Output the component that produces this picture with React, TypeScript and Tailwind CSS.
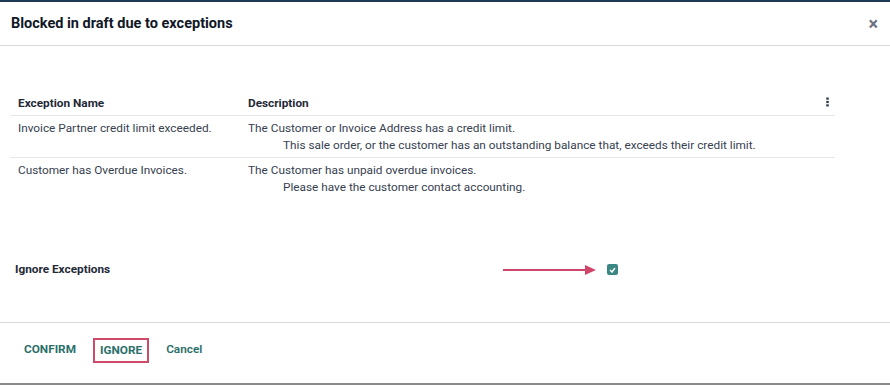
import React from 'react';

const rows = [
  {
    name: 'Invoice Partner credit limit exceeded.',
    desc: ['The Customer or Invoice Address has a credit limit.', 'This sale order, or the customer has an outstanding balance that, exceeds their credit limit.'],
  },
  {
    name: 'Customer has Overdue Invoices.',
    desc: ['The Customer has unpaid overdue invoices.', 'Please have the customer contact accounting.'],
  },
];

const App: React.FC = () => {
  return (
    <div className="w-[890px] h-[385px] bg-white flex flex-col font-['Roboto',sans-serif] text-[#374151] overflow-hidden">
      <div className="h-[2px] bg-[#1e3a52]" />
      {/* Header */}
      <div className="h-[44px] flex items-center justify-between pl-[11px] pr-[12px] border-b border-[#d8dadd]">
        <h4 className="text-[14.5px] font-bold text-[#111827]">Blocked in draft due to exceptions</h4>
        <span className="text-[#6b7280] text-[18px] leading-none font-bold">×</span>
      </div>

      {/* Body */}
      <div className="flex-1 flex flex-col pl-[10px] pr-[55px] pt-[43px]">
        <table className="w-full text-[11.8px] border-collapse">
          <thead>
            <tr className="border-b border-[#e5e7eb]">
              <th className="text-left font-bold text-[#1f2937] pl-[8px] pt-[6px] pb-[3px] leading-[17px] w-[238px]">Exception Name</th>
              <th className="text-left font-bold text-[#1f2937] pt-[6px] pb-[3px] leading-[17px]">Description</th>
              <th className="w-[20px] pr-[6px] text-right text-[#374151] leading-[17px]">
                <svg width="3" height="10" viewBox="0 0 3 10" className="inline-block">
                  <rect x="0.2" y="0.5" width="2.6" height="2.2" fill="currentColor" />
                  <rect x="0.2" y="3.9" width="2.6" height="2.2" fill="currentColor" />
                  <rect x="0.2" y="7.3" width="2.6" height="2.2" fill="currentColor" />
                </svg>
              </th>
            </tr>
          </thead>
          <tbody>
            {rows.map((r, i) => (
              <tr key={i} className={i === 0 ? 'border-b border-[#e5e7eb]' : ''}>
                <td className="align-top pl-[8px] pt-[4px] pb-[3px] leading-[17px]">{r.name}</td>
                <td className="align-top pt-[4px] pb-[3px] leading-[17px]" colSpan={2}>
                  <div>{r.desc[0]}</div>
                  <div className="pl-[35px]">{r.desc[1]}</div>
                </td>
              </tr>
            ))}
          </tbody>
        </table>

        <div className="mt-[62px] flex items-center pl-[5px]">
          <span className="text-[11.8px] font-bold text-[#1f2937] w-[488px]">Ignore Exceptions</span>
          <svg width="94" height="12" viewBox="0 0 94 12" className="mr-[10px]">
            <line x1="0" y1="6" x2="84" y2="6" stroke="#d0466a" strokeWidth="2" />
            <polygon points="82,1 93,6 82,11" fill="#d0466a" />
          </svg>
          <span className="w-[11px] h-[11px] bg-[#3b8783] rounded-[2px] flex items-center justify-center">
            <svg width="7" height="6" viewBox="0 0 7 6">
              <path d="M1 3 L3 5 L6 1" stroke="white" strokeWidth="1.5" fill="none" />
            </svg>
          </span>
        </div>
      </div>

      {/* Footer */}
      <div className="h-[61px] border-t border-[#d8dadd] flex items-center pb-[6px] pl-[24px] gap-[17px] text-[11.8px] font-bold text-[#2b6f6b]">
        <span>CONFIRM</span>
        <span className="border-2 border-[#cf4a68] px-[5px] py-[3px] leading-[15px]">IGNORE</span>
        <span className="font-semibold">Cancel</span>
      </div>
      <div className="h-[2px] bg-[#8a8a8a]" />
    </div>
  );
};

export default App;
